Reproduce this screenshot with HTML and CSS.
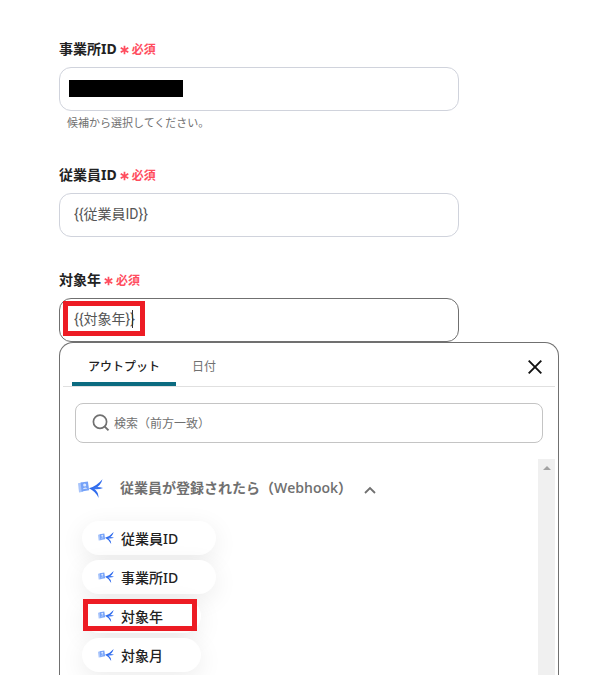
FILE: index.html
```html
<!DOCTYPE html>
<html lang="ja">
<head>
<meta charset="utf-8">
<meta name="viewport" content="width=device-width, initial-scale=1">
<title>アクション設定</title>
<link rel="stylesheet" href="styles.css">
</head>
<body>
<svg class="defs" aria-hidden="true">
  <symbol id="bird" viewBox="0 0 24 18">
    <path d="M0 4l4-.8 1 9-4 .6z" fill="#a9c5fb"/>
    <path d="M2.500 3.200l7-1 1.200 8.500-7.200 1.200z" fill="#75a2f8"/>
    <circle cx="6.400" cy="5.600" r="1.500" fill="#dce8ff"/>
    <path d="M4.400 9.800q2-3 4.600-.8z" fill="#dce8ff"/>
    <path d="M10.500 8.800Q18 6.500 23.500 0Q22 6.500 15.500 9.200Q19.500 12 19.800 18Q16.500 11.500 10.500 8.800z" fill="#2f6bed"/>
    <path d="M14 8.500Q19 6.800 24 8.600Q20 10.300 14 9.500z" fill="#3a74ef"/>
  </symbol>
  <symbol id="star" viewBox="0 0 10 10">
    <path d="M5 .2V9.800M.8 2.600l8.400 4.800M9.200 2.600L.8 7.400" fill="none" stroke="#ff4d5e" stroke-width="1.900"/>
  </symbol>
</svg>
<main class="page">
  <form class="form">
    <div class="field">
      <label class="label" for="office">事業所ID <span class="required"><svg class="star"><use href="#star"/></svg>必須</span></label>
      <div class="control">
        <input class="input" id="office" type="text">
        <span class="redaction"></span>
      </div>
      <p class="hint">候補から選択してください。</p>
    </div>
    <div class="field">
      <label class="label" for="employee">従業員ID <span class="required"><svg class="star"><use href="#star"/></svg>必須</span></label>
      <div class="control"><input class="input" id="employee" type="text" value="{{従業員ID}}"></div>
    </div>
    <div class="field">
      <label class="label" for="year">対象年 <span class="required"><svg class="star"><use href="#star"/></svg>必須</span></label>
      <div class="control">
        <input class="input input-active" id="year" type="text" value="{{対象年}}">
        <span class="caret"></span>
        <span class="mark mark-input"></span>
      </div>
    </div>
  </form>
  <section class="panel">
    <div class="tabs">
      <button class="tab tab-active" type="button">アウトプット</button>
      <button class="tab" type="button">日付</button>
      <button class="close" type="button" aria-label="閉じる"><svg viewBox="0 0 14 14" width="14" height="14"><path d="M.7.700l12.600 12.600M13.300.7L.7 13.300" stroke="#111" stroke-width="1.900"/></svg></button>
    </div>
    <div class="search">
      <svg class="search-icon" viewBox="0 0 18 18"><circle cx="8" cy="7.700" r="6.600" fill="none" stroke="#707070" stroke-width="1.700"/><path d="M12.500 12.300l4 4" stroke="#707070" stroke-width="1.900"/></svg>
      <input class="search-input" type="text" aria-label="検索" placeholder="検索（前方一致）">
    </div>
    <div class="results">
      <div class="group">
        <button class="group-head" type="button">
          <svg class="bird-large"><use href="#bird"/></svg>
          <span class="group-title">従業員が登録されたら（Webhook）</span>
          <svg class="chevron" viewBox="0 0 12 8"><path d="M1 7l5-5 5 5" fill="none" stroke="#707070" stroke-width="1.800"/></svg>
        </button>
        <div class="chips">
          <button class="chip" type="button"><svg class="bird-small"><use href="#bird"/></svg>従業員ID</button>
          <button class="chip" type="button"><svg class="bird-small"><use href="#bird"/></svg>事業所ID</button>
          <button class="chip" type="button"><svg class="bird-small"><use href="#bird"/></svg>対象年<span class="mark mark-chip"></span></button>
          <button class="chip" type="button"><svg class="bird-small"><use href="#bird"/></svg>対象月</button>
        </div>
      </div>
      <div class="scrollbar"><span class="scroll-up"></span></div>
    </div>
  </section>
</main>
</body>
</html>
```
FILE: styles.css
```css
* { box-sizing: border-box; }

body {
  margin: 0;
  background: #fff;
  color: #222;
  font-family: "Noto Sans", "Noto Sans CJK JP", sans-serif;
  font-size: 14px;
}

button, input { font: inherit; color: inherit; }
button { border: 0; background: none; padding: 0; }

.defs { position: absolute; width: 0; height: 0; }

.page {
  display: flex;
  flex-direction: column;
  height: 100vh;
  padding: 39px 44px 0 59px;
  overflow: hidden;
}

.form {
  display: flex;
  flex-direction: column;
  gap: 33px;
  width: 81%;
  min-width: 240px;
  max-width: 400px;
}

.label {
  display: flex;
  align-items: center;
  gap: 3px;
  height: 20px;
  margin-bottom: 8px;
  font-weight: 700;
  line-height: 20px;
}

.required {
  display: flex;
  align-items: center;
  gap: 3px;
  padding-top: 2px;
  color: #ff4d5e;
  font-size: 12px;
}

.star { width: 9px; height: 10px; }

.control { position: relative; }

.input {
  display: block;
  width: 100%;
  height: 44px;
  padding: 0 14px 4px;
  border: 1px solid #d0d3dc;
  border-radius: 12px;
  outline: 0;
  background: #fff;
  color: #555;
  font-family: Roboto, "Noto Sans CJK JP", sans-serif;
}

.input-active { border-color: #707070; }

.redaction {
  position: absolute;
  top: 13px;
  left: 10px;
  width: 114px;
  height: 17px;
  background: #000;
}

.caret {
  position: absolute;
  top: 12px;
  left: 73px;
  width: 1px;
  height: 18px;
  background: #333;
}

.hint {
  margin: 3px 0 0 8px;
  color: #707070;
  font-size: 11px;
  line-height: 18px;
}

.mark {
  position: absolute;
  border: 5px solid #ed1c24;
  pointer-events: none;
}

.mark-input { top: 3px; left: 4px; width: 82px; height: 35px; }
.mark-chip { top: 0; left: 1px; width: 114px; height: 32px; }

.panel {
  display: flex;
  flex: 1;
  flex-direction: column;
  min-height: 0;
  max-width: 500px;
  padding: 0 3px;
  border: 1px solid #707070;
  border-bottom: 0;
  border-radius: 14px 14px 0 0;
  background: #fff;
}

.tabs {
  display: flex;
  flex-shrink: 0;
  height: 44px;
  padding: 0 13px 0 9px;
  border-bottom: 1px solid #e0e0e0;
}

.tab {
  height: 43px;
  padding: 6px 16px 0;
  border-bottom: 4px solid transparent;
  color: #707070;
  font-size: 12px;
}

.tab-active {
  border-bottom-color: #0b6b80;
  border-radius: 4px 4px 0 0;
  color: #222;
  font-weight: 500;
}

.close {
  display: flex;
  align-items: center;
  margin-left: auto;
  padding-top: 5px;
}

.search {
  display: flex;
  flex-shrink: 0;
  align-items: center;
  gap: 4px;
  height: 40px;
  margin: 16px 12px;
  padding: 0 16px;
  border: 1px solid #c4c4c4;
  border-radius: 8px;
}

.search-icon { flex-shrink: 0; width: 18px; height: 18px; }

.search-input {
  flex: 1;
  min-width: 0;
  padding: 0;
  border: 0;
  outline: 0;
  font-size: 12px;
}

.search-input::placeholder { color: #707070; opacity: 1; }

.results { display: flex; flex: 1; min-height: 0; overflow: hidden; }

.group { flex: 1; padding: 18px 0 0 15px; }

.group-head { display: flex; align-items: center; height: 22px; }
.bird-large { width: 25px; height: 19px; }

.group-title {
  margin: 0 12px 0 17px;
  color: #707070;
  font-family: "Open Sans", "Noto Sans CJK JP", sans-serif;
  font-size: 14px;
  font-weight: 600;
  line-height: 20px;
  white-space: nowrap;
}

.chevron { width: 12px; height: 8px; margin-top: 4px; }

.chips {
  display: flex;
  flex-direction: column;
  align-items: flex-start;
  gap: 5px;
  padding: 22px 0 0 4px;
}

.chip {
  position: relative;
  display: flex;
  align-items: center;
  gap: 7px;
  height: 34px;
  padding: 0 38px 0 16px;
  border-radius: 17px;
  background: #fff;
  box-shadow: 0 6px 24px rgba(0, 0, 0, 0.08);
  font-weight: 500;
}

.bird-small { width: 16px; height: 12px; }

.scrollbar { width: 17px; padding: 7px 5px; background: #f0f0f0; }

.scroll-up {
  display: block;
  border: 4px solid transparent;
  border-top: 0;
  border-bottom-color: #a3a3a3;
}
```
